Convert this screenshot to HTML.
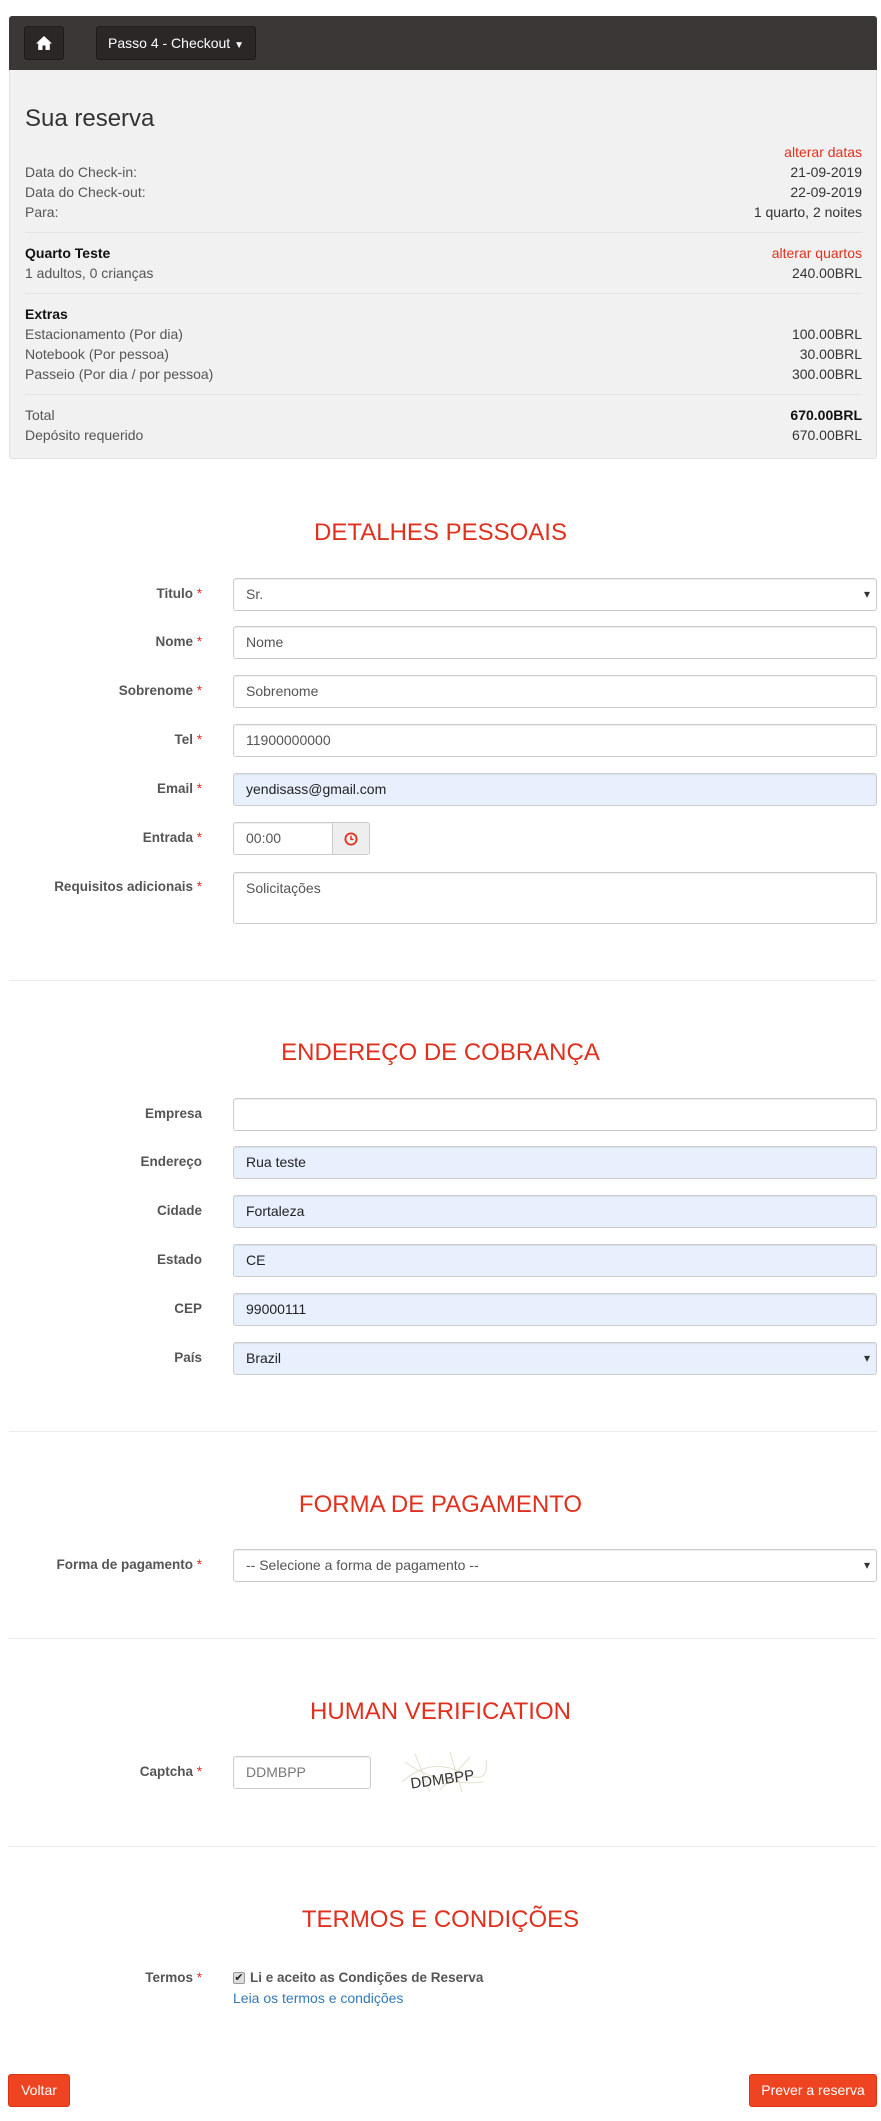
<!DOCTYPE html>
<html><head><meta charset="utf-8"><style>
*{box-sizing:border-box;margin:0;padding:0}
body{width:881px;height:2121px;background:#fff;font-family:"Liberation Sans",Arial,sans-serif;font-size:14px;color:#555;position:relative;overflow:hidden}
.abs{position:absolute}
.nav{left:9px;top:16px;width:868px;height:54px;background:#3b3736;border-radius:3px 3px 0 0}
.nbtn{position:absolute;top:10px;height:34px;background:#2a2726;border:1px solid #1e1c1b;border-radius:3px;color:#fff;font-size:14px;line-height:32px}
.panel{left:9px;top:70px;width:868px;height:389px;background:#f2f1f1;border:1px solid #e2e0e0;border-top:none;border-radius:0 0 3px 3px}
.row{position:absolute;left:24px;right:14px;height:20px;line-height:20px;font-size:14px;color:#555}
.row .r{position:absolute;right:0;top:0;color:#333}
.red{color:#e0301e!important}
.hr{position:absolute;left:24px;right:14px;height:1px;background:#e6e4e4}
.title{position:absolute;left:0;width:881px;text-align:center;color:#e0301e;font-size:24px;line-height:30px}
.lbl{position:absolute;right:679px;font-weight:bold;font-size:13.5px;color:#555;line-height:20px;text-align:right;white-space:nowrap}
.lbl i{font-style:normal;color:#e0301e;font-weight:normal}
.inp{position:absolute;left:233px;width:644px;height:33px;border:1px solid #ccc;border-radius:3px;background:#fff;padding:0 12px;line-height:31px;font-size:14px;color:#555;box-shadow:inset 0 1px 1px rgba(0,0,0,.07)}
.fill{background:#e8f0fe;color:#222}
.sel::after{content:"▾";position:absolute;right:6px;top:0;font-size:12px;color:#333}
.sep{position:absolute;left:9px;width:868px;height:1px;background:#eceaea}
.btn{position:absolute;height:33px;background:#ee4422;border:1px solid #d83515;border-radius:3px;color:#fff;line-height:31px;font-size:14px;text-align:center}
</style></head><body>
<div class="abs nav">
 <div class="nbtn" style="left:15px;width:40px;text-align:center">
  <svg width="16" height="14" viewBox="0 0 16 14" style="margin-top:9px"><path d="M8 0L0 7.5h2.2V14h4.3V9.5h3V14h4.3V7.5H16z" fill="#fff"/></svg>
 </div>
 <div class="nbtn" style="left:87px;width:160px;text-align:center">Passo 4 - Checkout <span style="font-size:10px">▼</span></div>
</div>
<div class="abs panel">
 <div style="position:absolute;left:15px;top:34px;font-size:24px;color:#333;line-height:30px">Sua reserva</div>
 <div class="row" style="top:72px;left:15px"><span class="r red">alterar datas</span></div>
 <div class="row" style="top:92px;left:15px">Data do Check-in:<span class="r">21-09-2019</span></div>
 <div class="row" style="top:112px;left:15px">Data do Check-out:<span class="r">22-09-2019</span></div>
 <div class="row" style="top:132px;left:15px">Para:<span class="r">1 quarto, 2 noites</span></div>
 <div class="hr" style="top:162px;left:15px"></div>
 <div class="row" style="top:173px;left:15px;color:#111;font-weight:bold">Quarto Teste<span class="r red" style="font-weight:normal">alterar quartos</span></div>
 <div class="row" style="top:193px;left:15px">1 adultos, 0 crianças<span class="r">240.00BRL</span></div>
 <div class="hr" style="top:223px;left:15px"></div>
 <div class="row" style="top:234px;left:15px;color:#111;font-weight:bold">Extras</div>
 <div class="row" style="top:254px;left:15px">Estacionamento (Por dia)<span class="r">100.00BRL</span></div>
 <div class="row" style="top:274px;left:15px">Notebook (Por pessoa)<span class="r">30.00BRL</span></div>
 <div class="row" style="top:294px;left:15px">Passeio (Por dia / por pessoa)<span class="r">300.00BRL</span></div>
 <div class="hr" style="top:324px;left:15px"></div>
 <div class="row" style="top:335px;left:15px">Total<span class="r" style="font-weight:bold;color:#111">670.00BRL</span></div>
 <div class="row" style="top:355px;left:15px">Depósito requerido<span class="r">670.00BRL</span></div>
</div>

<div class="title" style="top:518px">DETALHES PESSOAIS</div>
<div class="lbl" style="top:584px">Titulo <i>*</i></div><div class="inp sel" style="top:578px">Sr.</div>
<div class="lbl" style="top:632px">Nome <i>*</i></div><div class="inp" style="top:626px">Nome</div>
<div class="lbl" style="top:681px">Sobrenome <i>*</i></div><div class="inp" style="top:675px">Sobrenome</div>
<div class="lbl" style="top:730px">Tel <i>*</i></div><div class="inp" style="top:724px">11900000000</div>
<div class="lbl" style="top:779px">Email <i>*</i></div><div class="inp fill" style="top:773px">yendisass@gmail.com</div>
<div class="lbl" style="top:828px">Entrada <i>*</i></div>
<div class="inp" style="top:822px;width:100px;border-radius:3px 0 0 3px">00:00</div>
<div class="abs" style="left:332px;top:822px;width:38px;height:33px;background:#eee;border:1px solid #ccc;border-radius:0 3px 3px 0">
 <svg width="14" height="14" viewBox="0 0 14 14" style="position:absolute;left:11px;top:9px"><circle cx="7" cy="7" r="5.6" fill="none" stroke="#e0301e" stroke-width="1.8"/><path d="M7 3.8V7.4H9.6" fill="none" stroke="#e0301e" stroke-width="1.5"/></svg>
</div>
<div class="lbl" style="top:877px">Requisitos adicionais <i>*</i></div>
<div class="inp" style="top:872px;height:52px;line-height:20px;padding-top:5px">Solicitações</div>

<div class="sep" style="top:980px"></div>
<div class="title" style="top:1038px">ENDEREÇO DE COBRANÇA</div>
<div class="lbl" style="top:1104px">Empresa</div><div class="inp" style="top:1098px"></div>
<div class="lbl" style="top:1152px">Endereço</div><div class="inp fill" style="top:1146px">Rua teste</div>
<div class="lbl" style="top:1201px">Cidade</div><div class="inp fill" style="top:1195px">Fortaleza</div>
<div class="lbl" style="top:1250px">Estado</div><div class="inp fill" style="top:1244px">CE</div>
<div class="lbl" style="top:1299px">CEP</div><div class="inp fill" style="top:1293px">99000111</div>
<div class="lbl" style="top:1348px">País</div><div class="inp fill sel" style="top:1342px">Brazil</div>

<div class="sep" style="top:1431px"></div>
<div class="title" style="top:1490px">FORMA DE PAGAMENTO</div>
<div class="lbl" style="top:1555px">Forma de pagamento <i>*</i></div>
<div class="inp sel" style="top:1549px">-- Selecione a forma de pagamento --</div>

<div class="sep" style="top:1638px"></div>
<div class="title" style="top:1697px">HUMAN VERIFICATION</div>
<div class="lbl" style="top:1762px">Captcha <i>*</i></div>
<div class="inp" style="top:1756px;width:138px;color:#777">DDMBPP</div>
<svg class="abs" style="left:400px;top:1752px" width="88" height="42" viewBox="0 0 88 42">
 <g stroke="#e2e0cc" stroke-width="1" fill="none"><path d="M2 30Q30 5 60 20T86 8"/><path d="M5 10Q40 35 84 30"/><path d="M15 2L30 40M50 0L62 40M70 5L40 38"/></g>
 <text x="10" y="32" font-family="Liberation Sans,sans-serif" font-size="15" fill="#333" transform="rotate(-8 44 25)">DDMBPP</text>
</svg>

<div class="sep" style="top:1846px"></div>
<div class="title" style="top:1905px">TERMOS E CONDIÇÕES</div>
<div class="lbl" style="top:1968px">Termos <i>*</i></div>
<div class="abs" style="left:233px;top:1972px;width:12px;height:12px;border:1px solid #999;border-radius:2px;background:#ddd;font-size:11px;line-height:10px;color:#222;text-align:center">✔</div>
<div class="abs" style="left:250px;top:1968px;font-weight:bold;font-size:13.5px;line-height:20px;color:#555">Li e aceito as Condições de Reserva</div>
<div class="abs" style="left:233px;top:1988px;font-size:14px;line-height:20px;color:#337ab7">Leia os termos e condições</div>

<div class="btn" style="left:8px;top:2074px;width:62px">Voltar</div>
<div class="btn" style="left:749px;top:2074px;width:128px">Prever a reserva</div>
</body></html>
